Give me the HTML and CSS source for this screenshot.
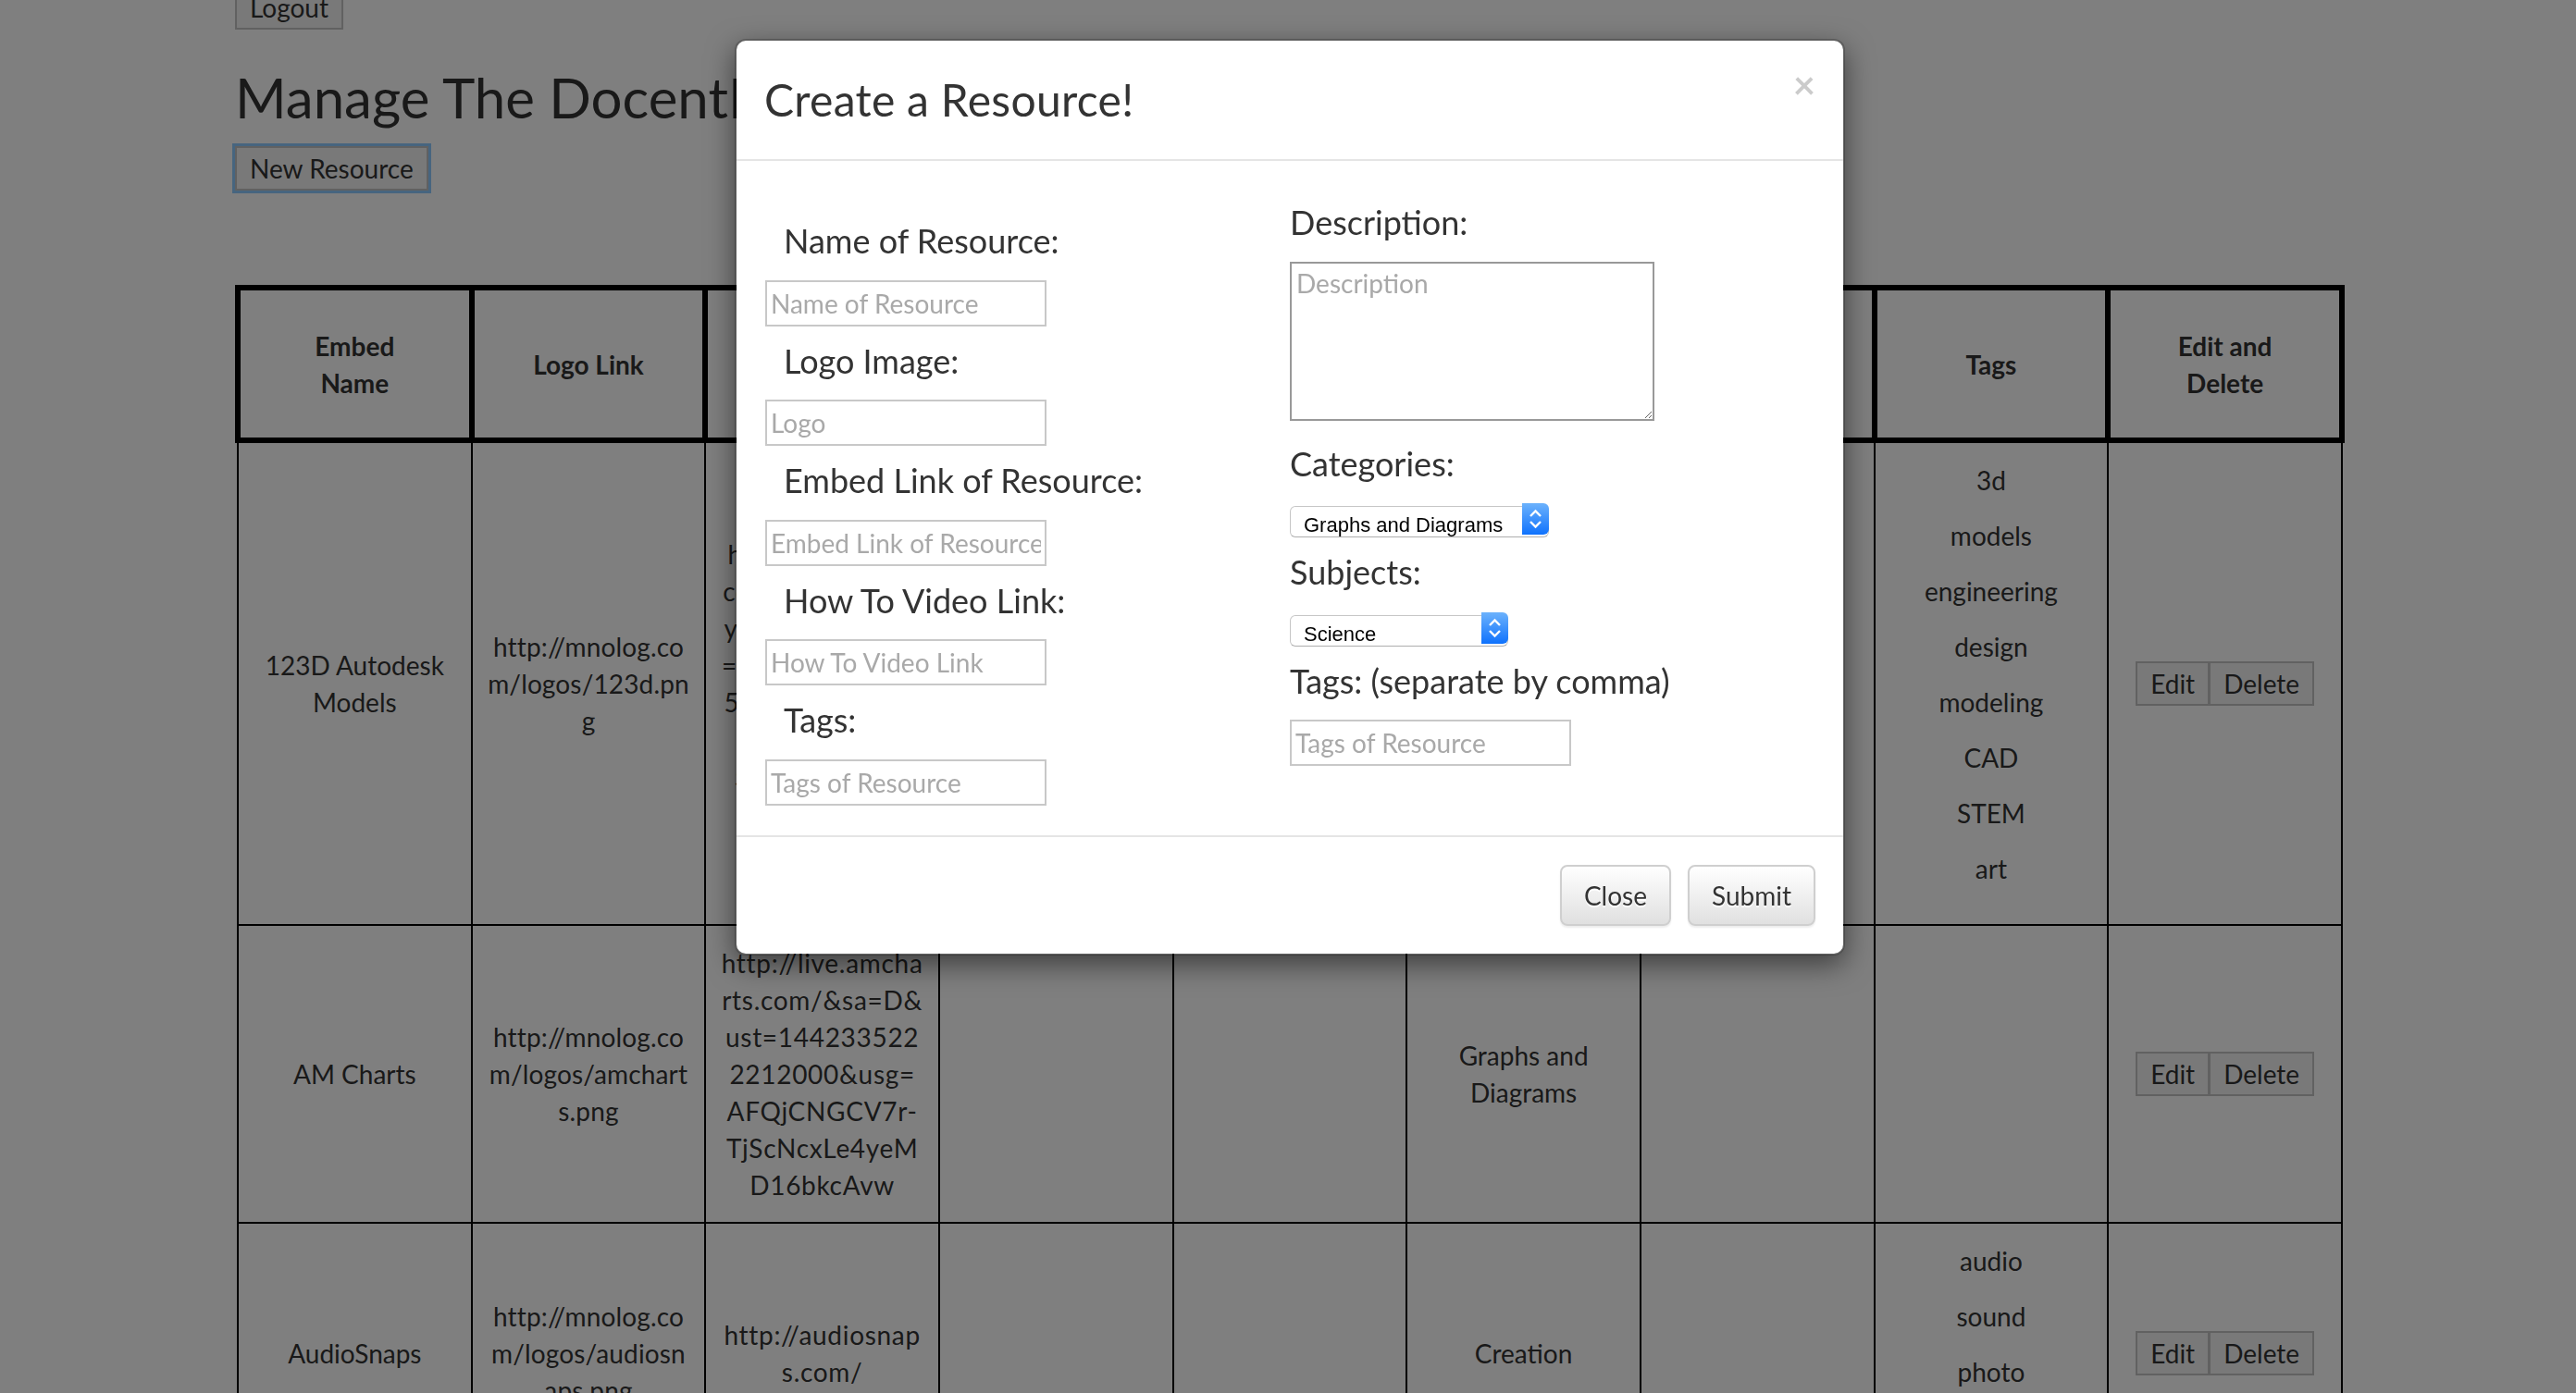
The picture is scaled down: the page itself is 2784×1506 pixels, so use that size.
FILE: index.html
```html
<!DOCTYPE html>
<html lang="en">
<head>
    <meta charset="UTF-8">
    <meta name="viewport" content="width=device-width, initial-scale=1.0">
    <title>Manage The DocentEdu Resources</title>
    <link rel="stylesheet" href="styles.css">
</head>
<body>
    <div class="container">
        <button type="button" class="btn-plain">Logout</button>
        <h2 class="page-title">Manage The DocentEdu Resources</h2>
        <button type="button" class="btn-plain btn-focus">New Resource</button>

        <table class="resource-table">
            <thead>
                <tr>
                    <th>Embed Name</th>
                    <th>Logo Link</th>
                    <th>Embed Link</th>
                    <th>How To</th>
                    <th>Description</th>
                    <th>Categories</th>
                    <th>Subjects</th>
                    <th>Tags</th>
                    <th>Edit and Delete</th>
                </tr>
            </thead>
            <tbody>
                <tr>
                    <td>123D Autodesk Models</td>
                    <td class="logo-url">http://mnolog.com/logos/123d.png</td>
                    <td class="embed-url">http://123dapp.<br>com/&amp;sa=D&amp;ust<br>yt=1442335222<br>=2212000&amp;usg=<br>5AFQjCNGCV7r<br>gTjScNcxLe4y<br>5D16bkcAvwY<br>M2k</td>
                    <td></td>
                    <td>Create and share 3D models.</td>
                    <td>Creation</td>
                    <td>Science</td>
                    <td>
                        <p class="tag">3d</p>
                        <p class="tag">models</p>
                        <p class="tag">engineering</p>
                        <p class="tag">design</p>
                        <p class="tag">modeling</p>
                        <p class="tag">CAD</p>
                        <p class="tag">STEM</p>
                        <p class="tag">art</p>
                    </td>
                    <td>
                        <div class="btn-row"><button type="button" class="btn-plain">Edit</button><button type="button" class="btn-plain">Delete</button></div>
                    </td>
                </tr>
                <tr>
                    <td>AM Charts</td>
                    <td class="logo-url">http://mnolog.com/logos/amcharts.png</td>
                    <td class="embed-url">http://live.amcharts.com/&amp;sa=D&amp;ust=1442335222212000&amp;usg=AFQjCNGCV7r-TjScNcxLe4yeMD16bkcAvw</td>
                    <td></td>
                    <td></td>
                    <td>Graphs and Diagrams</td>
                    <td></td>
                    <td></td>
                    <td>
                        <div class="btn-row"><button type="button" class="btn-plain">Edit</button><button type="button" class="btn-plain">Delete</button></div>
                    </td>
                </tr>
                <tr>
                    <td>AudioSnaps</td>
                    <td class="logo-url">http://mnolog.com/logos/audiosnaps.png</td>
                    <td class="embed-url">http://audiosnaps.com/</td>
                    <td></td>
                    <td></td>
                    <td>Creation</td>
                    <td></td>
                    <td>
                        <p class="tag">audio</p>
                        <p class="tag">sound</p>
                        <p class="tag">photo</p>
                        <p class="tag">recording</p>
                    </td>
                    <td>
                        <div class="btn-row"><button type="button" class="btn-plain">Edit</button><button type="button" class="btn-plain">Delete</button></div>
                    </td>
                </tr>
            </tbody>
        </table>
    </div>

    <div class="backdrop"></div>

    <div class="modal">
        <div class="modal-dialog">
            <form class="modal-content" id="resourceForm">
                <div class="modal-header">
                    <h3 class="modal-title">Create a Resource!</h3>
                    <button type="button" class="close">&times;</button>
                </div>

                <div class="modal-body">
                    <div class="col-left">
                        <label class="field-label" for="name">Name of Resource:</label>
                        <input type="text" class="text-input" id="name" placeholder="Name of Resource">

                        <label class="field-label" for="logo">Logo Image:</label>
                        <input type="text" class="text-input" id="logo" placeholder="Logo">

                        <label class="field-label" for="embed">Embed Link of Resource:</label>
                        <input type="text" class="text-input" id="embed" placeholder="Embed Link of Resource">

                        <label class="field-label" for="howto">How To Video Link:</label>
                        <input type="text" class="text-input" id="howto" placeholder="How To Video Link">

                        <label class="field-label" for="tags">Tags:</label>
                        <input type="text" class="text-input" id="tags" placeholder="Tags of Resource">
                    </div>

                    <div class="col-right">
                        <label class="field-label" for="description">Description:</label>
                        <textarea class="text-area" id="description" placeholder="Description"></textarea>

                        <label class="field-label" for="category">Categories:</label>
                        <div class="select-wrap select-wide">
                            <select id="category" class="select-box">
                                <option>Graphs and Diagrams</option>
                                <option>Creation</option>
                            </select>
                            <span class="select-arrow">
                                <svg width="29" height="34" viewBox="0 0 29 34"><polyline points="9,14 14.5,8.5 20,14" /><polyline points="9,20 14.5,25.5 20,20" /></svg>
                            </span>
                        </div>

                        <label class="field-label" for="subject">Subjects:</label>
                        <div class="select-wrap select-narrow">
                            <select id="subject" class="select-box">
                                <option>Science</option>
                                <option>Mathematics</option>
                            </select>
                            <span class="select-arrow">
                                <svg width="29" height="34" viewBox="0 0 29 34"><polyline points="9,14 14.5,8.5 20,14" /><polyline points="9,20 14.5,25.5 20,20" /></svg>
                            </span>
                        </div>

                        <label class="field-label" for="tagList">Tags: (separate by comma)</label>
                        <input type="text" class="text-input" id="tagList" placeholder="Tags of Resource">
                    </div>
                </div>

                <div class="modal-footer">
                    <button type="button" class="btn-default">Close</button>
                    <button type="submit" class="btn-default">Submit</button>
                </div>
            </form>
        </div>
    </div>
</body>
</html>
```

FILE: styles.css
```css
html, body {
    overflow: hidden;
}
body {
    margin: 0;
    font-family: Lato, "Open Sans", sans-serif;
    font-size: 28px;
    line-height: 40px;
    color: #333;
    background-color: #fff;
}
button, input, select, textarea {
    font: inherit;
}

/* page behind the dialog */
.container {
    display: flex;
    flex-direction: column;
    align-items: flex-start;
    width: 2280px;
    margin-left: 254px;
    margin-top: -16px;
}
.page-title {
    margin: 40px 0 20px;
    font-size: 60px;
    line-height: 66px;
    font-weight: 400;
}
.btn-plain {
    padding: 2px 14px;
    border: 2px solid #c2c2c2;
    background-color: #f2f2f2;
    color: #333;
    line-height: 40px;
}
.btn-focus {
    box-shadow: 0 0 0 3px rgb(142, 202, 255);
}
.btn-row {
    display: inline-flex;
}
.btn-row .btn-plain + .btn-plain {
    margin-left: -1px;
}

.resource-table {
    width: 100%;
    margin-top: 102px;
    border-collapse: collapse;
    table-layout: fixed;
    background-color: #fff;
}
.resource-table th {
    border: 6px solid #000;
    padding: 40px 48px 39px;
    font-weight: 700;
    text-align: center;
    vertical-align: middle;
}
.resource-table td {
    border: 2px solid #000;
    padding: 20px 16px;
    text-align: center;
    vertical-align: middle;
}
.resource-table td.logo-url {
    word-break: break-all;
    letter-spacing: 0.15px;
}
.resource-table td.embed-url {
    overflow-wrap: anywhere;
    letter-spacing: 0.7px;
}
.tag {
    margin: 0 0 20px;
}

/* dialog */
.backdrop {
    position: fixed;
    inset: 0;
    background-color: rgba(0, 0, 0, 0.5);
}
.modal {
    position: fixed;
    inset: 0 0 0 4px;
}
.modal-dialog {
    width: 1200px;
    margin: 42px auto 0;
}
.modal-content {
    margin: 0;
    background-color: #fff;
    background-clip: padding-box;
    border: 2px solid rgba(0, 0, 0, 0.2);
    border-radius: 12px;
    box-shadow: 0 10px 30px rgba(0, 0, 0, 0.5);
}
.modal-header {
    display: flex;
    justify-content: space-between;
    align-items: flex-start;
    padding: 30px;
    border-bottom: 2px solid #e5e5e5;
}
.modal-title {
    margin: 0;
    font-size: 48px;
    line-height: 68px;
    font-weight: 400;
    letter-spacing: 0.3px;
}
.close {
    margin-top: -4px;
    padding: 0;
    border: 0;
    background: none;
    font-size: 42px;
    font-weight: 700;
    line-height: 1;
    color: #000;
    opacity: 0.2;
}
.modal-body {
    display: grid;
    grid-template-columns: 568px 1fr;
    padding: 29px 30px 32px;
}
.col-left, .col-right {
    display: flex;
    flex-direction: column;
    align-items: flex-start;
}
.col-left {
    padding: 20px 0 0 1px;
}
.field-label {
    display: block;
    margin: 18px 0 22px;
    font-size: 36px;
    line-height: 1.1;
}
.col-left .field-label {
    padding-left: 20px;
}
.text-input {
    display: block;
    box-sizing: border-box;
    width: 304px;
    height: 50px;
    padding: 0 4px;
    border: 2px solid #c8c8c8;
    color: #333;
}
.text-input::placeholder, .text-area::placeholder {
    color: #a9a9a9;
}
.text-area {
    display: block;
    box-sizing: border-box;
    width: 394px;
    height: 172px;
    margin-bottom: 9px;
    padding: 4px 5px;
    border: 2px solid #999;
    line-height: normal;
    color: #333;
}
.select-wrap {
    position: relative;
    margin: 1px 0 3px;
    height: 34px;
}
.select-wide {
    width: 280px;
}
.select-narrow {
    width: 236px;
}
.select-box {
    appearance: none;
    -webkit-appearance: none;
    box-sizing: border-box;
    width: 100%;
    height: 34px;
    padding: 0 0 0 14px;
    border: 1px solid #c6c6c6;
    border-bottom-color: #aeaeae;
    border-radius: 6px;
    background-color: #fff;
    font-family: "Liberation Sans", Arial, sans-serif;
    font-size: 22px;
    color: #000;
}
.select-arrow {
    position: absolute;
    top: 0;
    right: 0;
    width: 29px;
    height: 34px;
    border-radius: 0 6px 6px 0;
    background: linear-gradient(#6cb2fc, #0f72fd);
    pointer-events: none;
}
.select-arrow svg {
    display: block;
    fill: none;
    stroke: #fff;
    stroke-width: 2.4;
}
.modal-footer {
    display: flex;
    justify-content: flex-end;
    gap: 18px;
    padding: 30px;
    border-top: 2px solid #e5e5e5;
}
.btn-default {
    padding: 11px 24px;
    border: 2px solid #cfcfcf;
    border-radius: 8px;
    background: linear-gradient(#fff, #e0e0e0);
    color: #333;
    line-height: 40px;
    text-shadow: 0 2px 0 #fff;
    box-shadow: 0 2px 2px rgba(0, 0, 0, 0.075);
}
```
